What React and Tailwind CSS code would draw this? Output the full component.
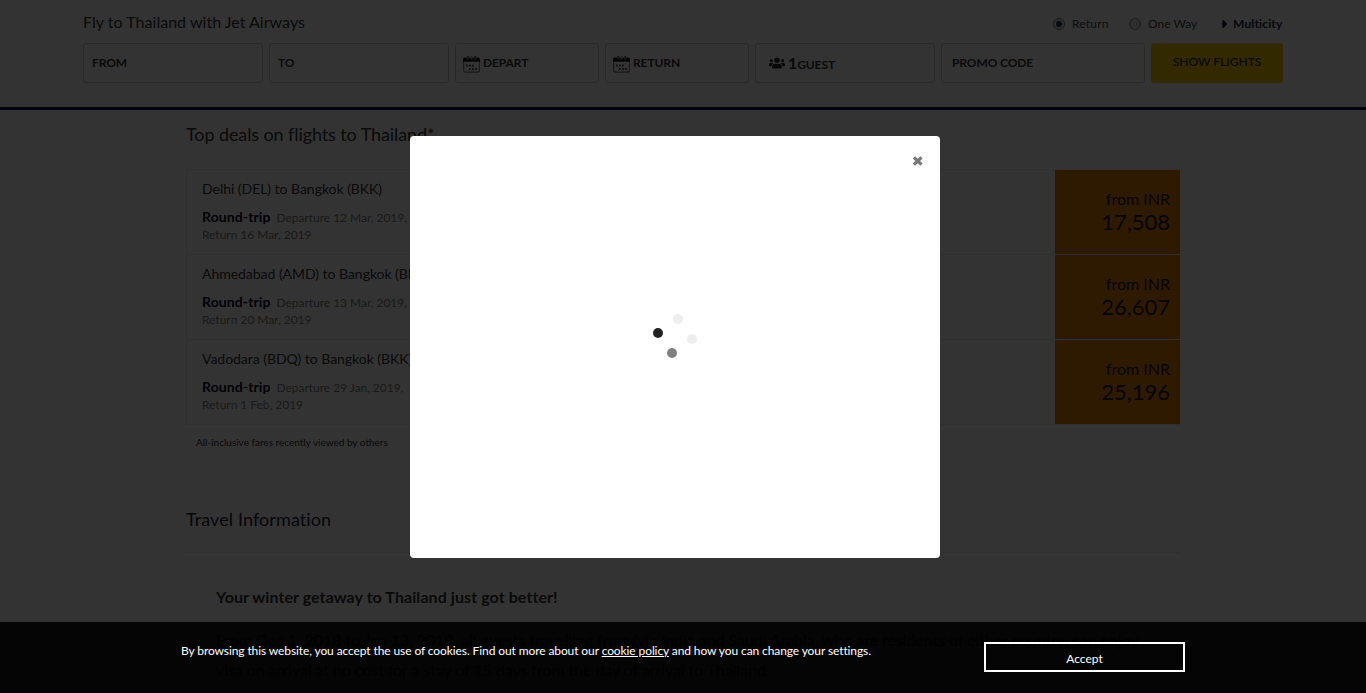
import React from "react";
import { FaUsers, FaCaretRight } from "react-icons/fa";

const deals = [
  { route: "Delhi (DEL) to Bangkok (BKK)", dep: "12 Mar, 2019", ret: "16 Mar, 2019", fare: "17,508" },
  { route: "Ahmedabad (AMD) to Bangkok (BKK)", dep: "13 Mar, 2019", ret: "20 Mar, 2019", fare: "26,607" },
  { route: "Vadodara (BDQ) to Bangkok (BKK)", dep: "29 Jan, 2019", ret: "1 Feb, 2019", fare: "25,196" },
];

function CalendarIcon() {
  return (
    <svg width="17" height="17" viewBox="0 0 17 17" className="mt-[2px] mr-[3px] shrink-0">
      <rect x="0.6" y="2.6" width="15.8" height="13.6" rx="2" fill="none" stroke="#808080" strokeWidth="1.2" />
      <path d="M0 5.8V3.2Q0 1.4 1.8 1.4H15.2Q17 1.4 17 3.2V5.8Z" fill="#1c1c1c" />
      <path d="M5 0v3.2M8.6 0v3.2M12.2 0v3.2" stroke="#bbb" strokeWidth="2.2" />
      <path d="M5 0v3M12.2 0v3" stroke="#333" strokeWidth="1.1" />
      <path d="M3 9.5h1.8M6 9.5h1.8M9 9.5h1.8M6 13h1.8M9 13h1.8M12 13h1.6" stroke="#333" strokeWidth="1.6" />
      <path d="M3 9.5h1.8M12 13h1.6" stroke="#a65a1a" strokeWidth="1.4" />
    </svg>
  );
}

function Field({ className, children }) {
  return (
    <div className={"flex h-[40px] rounded-[3px] border border-[#ccc] text-[12px] font-bold tracking-[-0.1px] text-[#333] " + className}>
      <div className="flex h-[38px] items-center">{children}</div>
    </div>
  );
}

function Radio({ on }) {
  return (
    <span className="flex h-[12px] w-[12px] items-center justify-center rounded-full border border-[#8a8a8a] bg-[#e4e4e4]">
      {on && <span className="h-[6px] w-[6px] rounded-full bg-[#0a4a70]" />}
    </span>
  );
}

export default function App() {
  return (
    <div className="relative h-[693px] w-full overflow-hidden bg-white font-['Lato',sans-serif] text-[#333] [font-variant-ligatures:none]">
      <header className="h-[110px] border-b-[3px] border-[#00004a] px-[83px]">
        <div className="flex h-[43px] w-[1200px] items-start justify-between">
          <h1 className="pt-[10px] text-[16px] leading-[24px] tracking-[0.03px]">Fly to Thailand with Jet Airways</h1>
          <div className="mt-[14px] flex h-[20px] items-center text-[12px] text-[#444]">
            <Radio on />
            <span className="ml-[7px] w-[37px] tracking-[0.2px]">Return</span>
            <span className="ml-[20px]"><Radio /></span>
            <span className="ml-[7px] w-[50px]">One Way</span>
            <FaCaretRight className="ml-[24px] w-[6px] text-[14px] text-[#00002e]" />
            <span className="ml-[5px] w-[50px] font-bold tracking-[0.15px] text-[#1b1b38]">Multicity</span>
          </div>
        </div>
        <div className="flex w-[1200px] gap-[6px]">
          <Field className="w-[180px] pl-[8px]">FROM</Field>
          <Field className="w-[180px] pl-[8px]">TO</Field>
          <Field className="w-[144px] pl-[7px]"><CalendarIcon />DEPART</Field>
          <Field className="w-[144px] pl-[7px]"><CalendarIcon />RETURN</Field>
          <Field className="w-[180px] pl-[13px]">
            <FaUsers className="mr-[3px] text-[16px] text-[#222]" />
            <span className="pb-[1px]"><span className="text-[16px]">1</span>GUEST</span>
          </Field>
          <Field className="w-[204px] pl-[10px]">PROMO CODE</Field>
          <button className="h-[40px] w-[132px] rounded-[3px] bg-[#ffcd00] pb-[2px] text-[12px] font-semibold">SHOW FLIGHTS</button>
        </div>
      </header>

      <main className="ml-[186px] w-[994px]">
        <h2 className="pt-[12px] text-[18px] leading-[24px] tracking-[-0.1px]">Top deals on flights to Thailand*</h2>
        <div className="mt-[23px] border-t border-l border-[#ebebeb]">
          {deals.map((d) => (
            <div key={d.route} className="flex h-[85px] justify-between">
              <div className="flex-1 border-b border-[#ebebeb] pt-[9px] pl-[15px]">
                <div className="text-[14px] leading-[20px] tracking-[-0.03px]">{d.route}</div>
                <div className="mt-[9px] w-[220px] text-[12px] leading-[17px] tracking-[-0.03px] text-[#808080]">
                  <b className="mr-[6px] text-[14px] tracking-[0.1px] text-[#00001f]">Round-trip</b>Departure {d.dep},
                  <div>Return {d.ret}</div>
                </div>
              </div>
              <div className="w-[125px] border-b border-[#ebebeb] bg-[#e68000] bg-clip-padding pt-[17px] pr-[10px] text-right text-[#1a1a38]">
                <div className="text-[16px] leading-[23px]">from INR</div>
                <div className="text-[22px] leading-[24px]">{d.fare}</div>
              </div>
            </div>
          ))}
        </div>
        <p className="mt-[9px] pl-[10px] text-[10px] leading-[16px]">All-inclusive fares recently viewed by others</p>
        <h2 className="mt-[57px] text-[18px] leading-[24px] tracking-[0.1px] text-[#1b1b38]">Travel Information</h2>
        <div className="mt-[21px] border-t border-[#ebebeb] pt-[29px] pl-[30px]">
          <h3 className="text-[16px] leading-[30px] font-bold tracking-[0.08px]">Your winter getaway to Thailand just got better!</h3>
          <p className="mt-[13px] w-[960px] text-[16px] leading-[30px] tracking-[-0.07px] whitespace-nowrap">
            From Dec 1, 2018 to Jan 13, 2019, all guests travelling from/via India and Saudi Arabia, who are residents of either country, can enjoy<br />visa on arrival at no cost for a stay of 15 days from the day of arrival to Thailand.
          </p>
        </div>
      </main>

      <div className="absolute inset-0 bg-black/80" />

      <div className="absolute top-[136px] left-[410px] flex h-[422px] w-[530px] flex-col rounded-[4px] bg-white">
        <button aria-label="Close" className="mt-[20px] mr-[17px] self-end">
          <svg width="11" height="10" viewBox="0 0 11 10">
            <path d="M1.9 1.4L9.5 8.6M9.5 1.4L1.9 8.6" stroke="#777" strokeWidth="3.2" />
          </svg>
        </button>
        <svg width="50" height="50" viewBox="0 0 50 50" className="mt-[146px] ml-[240px]">
          <circle cx="28" cy="7" r="5" fill="#eee" />
          <circle cx="42" cy="27" r="5" fill="#eee" />
          <circle cx="22" cy="41" r="5" fill="#808080" />
          <circle cx="8" cy="21" r="5" fill="#222" />
        </svg>
      </div>

      <div className="absolute right-0 bottom-0 left-0 flex h-[71px] items-start bg-black/90 pl-[181px] text-[12px] text-white">
        <p className="w-[803px] pt-[20px] leading-[18px] tracking-[-0.1px]">
          By browsing this website, you accept the use of cookies. Find out more about our <u>cookie policy</u> and how you can change your settings.
        </p>
        <button className="mt-[20px] h-[30px] w-[201px] border-2 border-white pt-[4px] leading-[18px]">Accept</button>
      </div>
    </div>
  );
}
